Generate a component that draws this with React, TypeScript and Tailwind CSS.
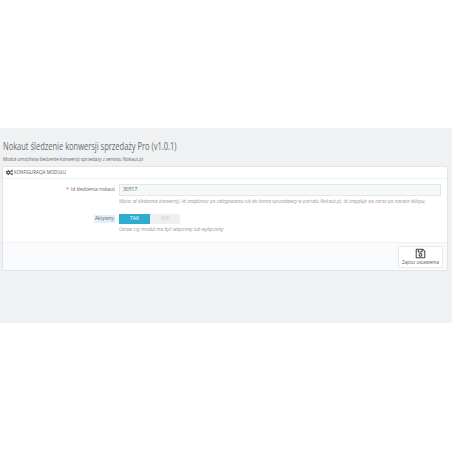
import { FaCogs, FaRegSave } from "react-icons/fa"

export default function App() {
  return (
    <div className="h-[452px] w-[452px] overflow-hidden bg-white font-['Open_Sans',sans-serif]">
      <div className="mt-[128px] h-[195px] bg-[#eff1f2] pl-[2px] pr-[4px]">
        <div className="pt-[12px] pl-[1px]">
          <h1 className="origin-left scale-x-[0.75] text-[10px] leading-[13px] font-medium whitespace-nowrap text-[#666c70]">
            Nokaut śledzenie konwersji sprzedaży Pro (v1.0.1)
          </h1>
          <p className="mt-[3px] text-[4.45px] leading-[7px] text-[#666]">
            Moduł umożliwia śledzenie konwersji sprzedaży z serwisu Nokaut.pl
          </p>
        </div>

        <div className="mt-[3px] flex h-[105px] flex-col rounded-[2px] border border-[#e2e5e7] bg-white">
          <div className="flex h-[12px] items-center gap-[1px] border-b border-[#f0f1f2] pl-[3px] text-[4.4px] text-[#555]">
            <FaCogs className="h-[7px] w-[7px] text-[#555]" />
            <span>KONFIGURACJA MODUŁU</span>
          </div>

          <div className="flex-1 pt-[5px]">
            <div className="flex">
              <div className="flex h-[12px] w-[112px] items-center justify-end text-[4.9px] text-[#666]">
                <span className="mr-[1px] text-[#e3342f]">*</span>
                <span className="ml-[1px]">Id śledzenia nokaut</span>
              </div>
              <div className="ml-[4px] w-[322px]">
                <div className="flex h-[12px] items-center border border-[#dfe8eb] bg-[#f5f8f9] pl-[3px] text-[5px] text-[#555]">
                  30517
                </div>
                <p className="mt-[2px] text-[4.85px] leading-[7px] text-[#999] italic">
                  Wpisz id śledzenia konwersji, id znajdziesz po zalogowaniu się do konta sprzedawcy w portalu Nokaut.pl, id znajduje się zaraz po nazwie sklepu.
                </p>
              </div>
            </div>

            <div className="mt-[9px] flex">
              <div className="flex h-[10px] w-[112px] items-center justify-end text-[4.9px] text-[#666]">
                <span className="bg-[#dff0f8] px-[1px]">Aktywny</span>
              </div>
              <div className="ml-[4px]">
                <div className="flex h-[10px] w-[61px] text-[5px]">
                  <div className="flex w-[31px] items-center justify-center bg-[#2eacce] text-white">TAK</div>
                  <div className="flex w-[30px] items-center justify-center bg-[#eef0f0] text-[#ccc]">NIE</div>
                </div>
                <p className="mt-[2px] text-[4.85px] leading-[7px] text-[#999] italic">
                  Ustaw czy moduł ma być włączony lub wyłączony
                </p>
              </div>
            </div>
          </div>

          <div className="flex h-[28px] items-center justify-end border-t border-[#f0f1f2] bg-[#fafbfc] pr-[4px]">
            <div className="flex h-[22px] w-[45px] flex-col items-center justify-center rounded-[1px] border border-[#e8eaeb] bg-white text-[4.5px] leading-[6px] text-[#555]">
              <FaRegSave className="h-[11px] w-[11px] text-[#444]" />
              <span>Zapisz ustawienia</span>
            </div>
          </div>
        </div>
      </div>
    </div>
  )
}
